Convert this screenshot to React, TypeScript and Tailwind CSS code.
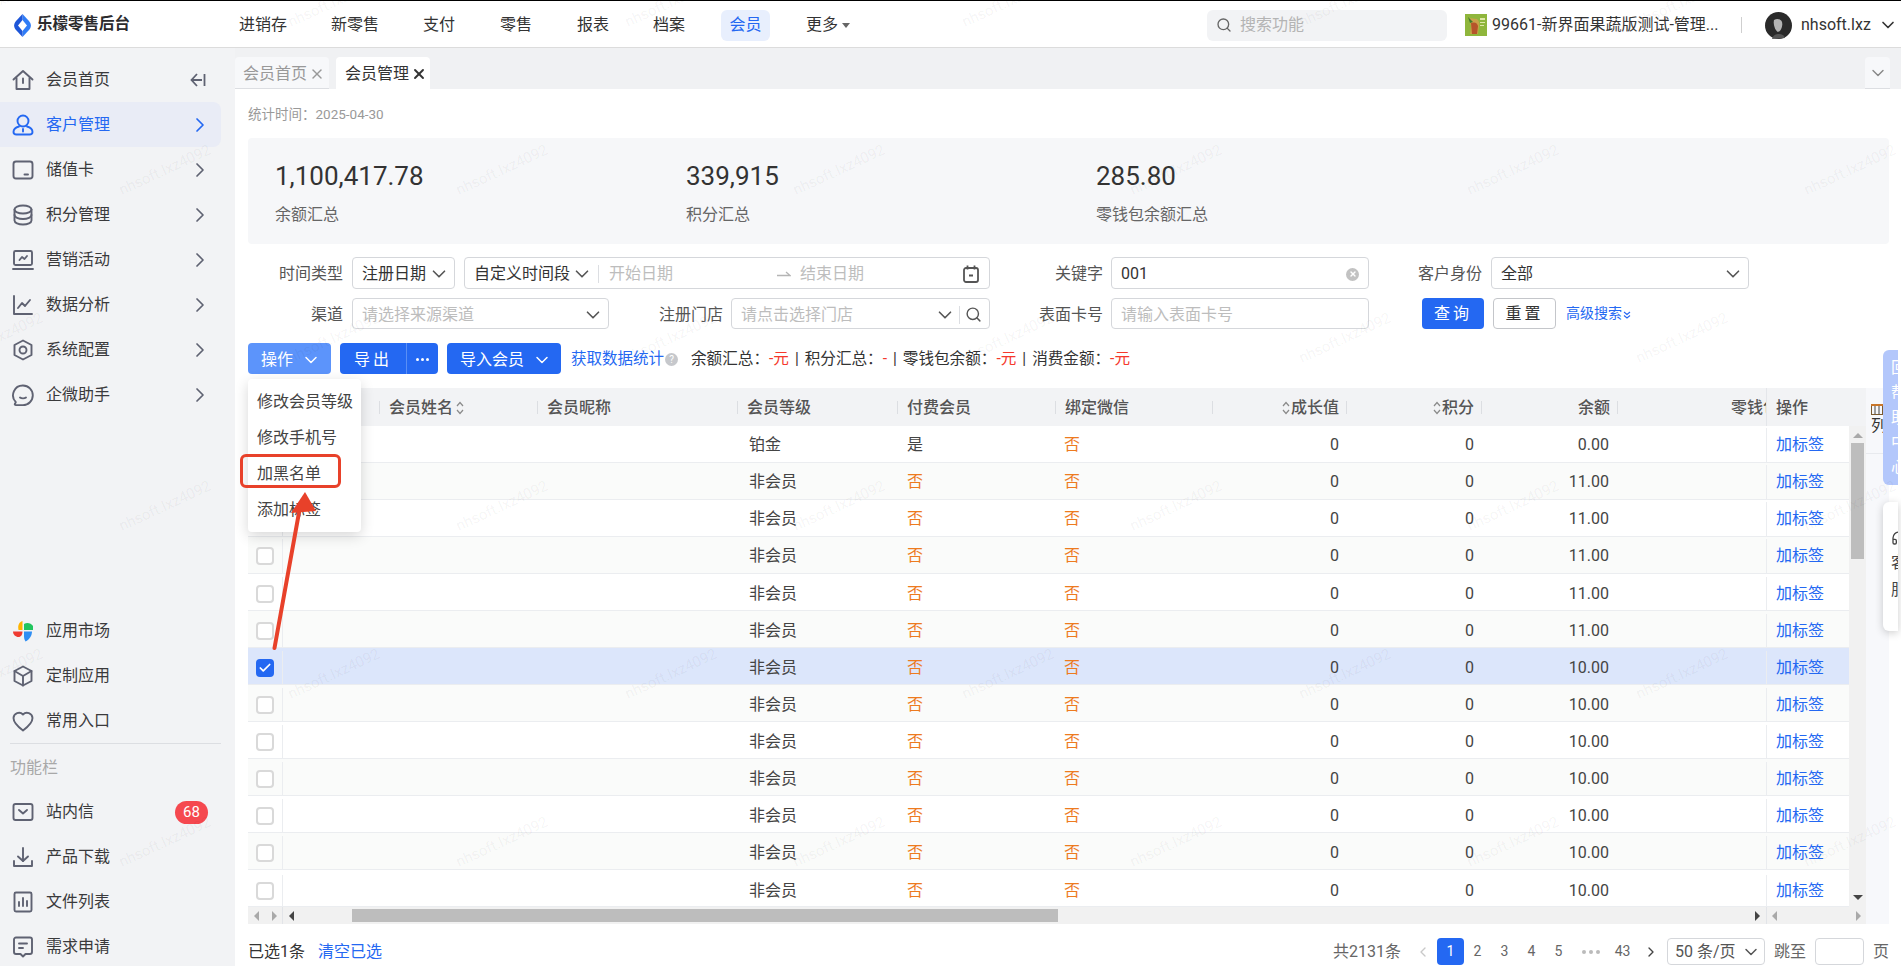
import { ChevronDown, ChevronRight, ChevronLeft, Search, X, Headphones, Check } from "lucide-react";
import type { ReactNode } from "react";

const font = "font-['Roboto','Noto_Sans_CJK_SC',sans-serif]";

function Ico({ children, className = "text-[#5f6272]" }: { children: ReactNode; className?: string }) {
  return (
    <svg
      viewBox="0 0 24 24"
      fill="none"
      stroke="currentColor"
      strokeWidth="1.9"
      strokeLinecap="round"
      strokeLinejoin="round"
      className={`w-[24px] h-[24px] shrink-0 ${className}`}
    >
      {children}
    </svg>
  );
}

const icons: Record<string, ReactNode> = {
  home: <><path d="M2.5 11.5 12 3l9.500 8.500" /><path d="M5.500 10v11h13V10" /><path d="M12 10.500v4.500" /></>,
  user: <><circle cx="12" cy="8" r="5.500" /><path d="M8 13.500C4.500 14.500 2.500 17 2.500 19c0 1.500 1 2.500 3 2.500h13c2 0 3-1 3-2.500 0-2-2-4.500-5.500-5.500" /><path d="M12 16v2.500" /></>,
  card: <><rect x="2.500" y="3.500" width="19" height="17" rx="2.500" /><path d="M13.500 16.500h3.500" /></>,
  coins: <><ellipse cx="12" cy="6.500" rx="8.500" ry="4" /><path d="M3.500 6.500v11c0 2.200 3.800 4 8.500 4s8.500-1.800 8.500-4v-11" /><path d="M3.500 12c0 2.200 3.800 4 8.500 4s8.500-1.800 8.500-4" /></>,
  screen: <><rect x="3" y="3" width="18" height="14" rx="1.500" /><path d="m8.500 12 2.500-3 2.500 2 2.500-3" /><path d="M2 21h20" /></>,
  chart: <><path d="M3 3v18h18" /><path d="m7 15 4-5 3 3 5-6" /></>,
  gear: <><path d="M12 2.500 20.500 7v10L12 21.500 3.500 17V7z" /><circle cx="12" cy="12" r="3.500" /></>,
  chat: <><path d="M12 2.500a9.800 9.800 0 0 1 0 19.600H5c-1 0-1.500-.5-1-1.300l.8-1.700A9.800 9.800 0 0 1 12 2.500z" /><path d="M9 14.500c1.500 1.200 4.500 1.200 6 0" /></>,
  box: <><path d="M12 2.500 20.500 7v10L12 21.500 3.500 17V7z" /><path d="M3.500 7 12 12l8.500-5M12 12v9.500" /></>,
  heart: <path d="M12 21.500C6 17 2.500 13.500 2.500 9A5.500 5.500 0 0 1 12 5.500 5.500 5.500 0 0 1 21.500 9c0 4.500-3.500 8-9.500 12.500z" />,
  mail: <><rect x="2.500" y="4" width="19" height="16" rx="2" /><path d="m8 10 4 3.500 4-3.500" /></>,
  download: <><path d="M12 3v13" /><path d="m7 11.500 5 4.500 5-4.500" /><path d="M3 16v5h18v-5" /></>,
  file: <><rect x="3.500" y="2.500" width="17" height="19" rx="1.500" /><path d="M8 16v-4M12 16V8M16 16v-5" /></>,
  note: <><path d="M3 4.500a2 2 0 0 1 2-2h14a2 2 0 0 1 2 2V17a2 2 0 0 1-2 2h-4.500L12 21.500 9.500 19H5a2 2 0 0 1-2-2z" /><path d="M8 8.500h8M8 13h4" /></>,
};

function AppMarket() {
  return (
    <svg viewBox="0 0 24 24" className="w-[24px] h-[24px] shrink-0">
      <path d="M11.500 2C8 3 6.500 6.500 7.500 11h4z" fill="#ffb400" />
      <path d="M13 5c3-2 7-1 9 2v4h-9z" fill="#22c55e" />
      <path d="M13 12.500h8c0 4-2.500 8-6.500 10-1.500-2-1.500-5-1.500-6z" fill="#2f8ef4" />
      <path d="M11.500 12.500H2c0 3 2.500 5.500 5.500 5.500 2.500 0 4-2.500 4-5.500z" fill="#ef3b32" />
    </svg>
  );
}

function NavItem({ icon, label, badge }: { icon: ReactNode; label: string; badge?: string }) {
  return (
    <div className="flex items-center h-[45px] shrink-0 w-[221px] pl-[11px] pt-[1px] text-[#3a3a3c]">
      {icon}
      <span className="ml-[11px] text-[16px]">{label}</span>
      {badge && (
        <span className="ml-auto mr-[13px] h-[23px] w-[33px] rounded-full bg-[#f5484f] text-white text-[15px] flex items-center justify-center">
          {badge}
        </span>
      )}
    </div>
  );
}

function MenuRow({ ic, label, active }: { ic: string; label: string; active?: boolean }) {
  return (
    <div className={`flex items-center h-[45px] shrink-0 w-[221px] pl-[11px] pt-[1px] rounded-r-lg ${active ? "bg-[#e9ecf6] text-[#2468f2]" : "text-[#3a3a3c]"}`}>
      <Ico className={active ? "text-[#2468f2]" : "text-[#5f6272]"}>{icons[ic]}</Ico>
      <span className="ml-[11px] text-[16px]">{label}</span>
      <ChevronRight className={`ml-auto mr-[9px] w-[24px] h-[24px] ${active ? "text-[#2468f2]" : "text-[#5f6272]"}`} strokeWidth={1.7} />
    </div>
  );
}

function Sidebar() {
  return (
    <aside className="w-[235px] shrink-0 bg-[#f2f3f5] pt-[9px] overflow-hidden flex flex-col">
      <div className="flex items-center h-[45px] shrink-0 w-[221px] pl-[11px] pt-[1px] text-[#3a3a3c]">
        <Ico>{icons.home}</Ico>
        <span className="ml-[11px] text-[16px]">会员首页</span>
        <svg viewBox="0 0 16 14" fill="none" stroke="#5f6272" strokeWidth="1.800" className="ml-auto mr-[15px] w-[16px] h-[14px]">
          <path d="M7 1 1.500 7 7 13M1.500 7H12M14.500 1v12" />
        </svg>
      </div>
      <MenuRow ic="user" label="客户管理" active />
      <MenuRow ic="card" label="储值卡" />
      <MenuRow ic="coins" label="积分管理" />
      <MenuRow ic="screen" label="营销活动" />
      <MenuRow ic="chart" label="数据分析" />
      <MenuRow ic="gear" label="系统配置" />
      <MenuRow ic="chat" label="企微助手" />
      <div className="mt-[191px]" />
      <NavItem icon={<AppMarket />} label="应用市场" />
      <NavItem icon={<Ico>{icons.box}</Ico>} label="定制应用" />
      <NavItem icon={<Ico>{icons.heart}</Ico>} label="常用入口" />
      <div className="ml-[10px] w-[211px] h-px bg-[#dcdee2] shrink-0" />
      <div className="h-[45px] shrink-0 pl-[10px] pt-[3px] flex items-center text-[16px] text-[#a8a8a8]">功能栏</div>
      <NavItem icon={<Ico>{icons.mail}</Ico>} label="站内信" badge="68" />
      <NavItem icon={<Ico>{icons.download}</Ico>} label="产品下载" />
      <NavItem icon={<Ico>{icons.file}</Ico>} label="文件列表" />
      <NavItem icon={<Ico>{icons.note}</Ico>} label="需求申请" />
    </aside>
  );
}

function Header() {
  const items = [
    ["进销存", "w-[92px]"],
    ["新零售", "w-[92px]"],
    ["支付", "w-[77px]"],
    ["零售", "w-[77px]"],
    ["报表", "w-[76px]"],
    ["档案", "w-[68px]"],
  ];
  return (
    <header className="h-[48px] shrink-0 border-t border-black border-b border-b-[#dcdcdc] bg-white flex items-center pt-[2px]">
      <svg viewBox="0 0 17 23" className="ml-[14px] w-[17px] h-[23px]">
        <path d="M8.500 0 15 7c2.500 3 2.500 6 0 9l-6.500 7z" fill="#2f7cf6" />
        <path d="M8.500 0 2 7c-2.500 3-2.500 6 0 9l6.500 7z" fill="#1e56d8" />
        <path d="M8.500 6 13 11.500 8.500 17 4 11.500z" fill="#fff" />
      </svg>
      <span className="ml-[6px] w-[202px] text-[15.500px] font-bold text-[#2b2b2d]">乐檬零售后台</span>
      {items.map(([t, w]) => (
        <span key={t} className={`${w} text-[16px] text-[#333]`}>{t}</span>
      ))}
      <span className="w-[49px] h-[31px] rounded-md bg-[#e8effd] text-[#2468f2] text-[16px] flex items-center justify-center">会员</span>
      <span className="ml-[36px] text-[16px] text-[#333]">更多</span>
      <span className="ml-[4px] w-0 h-0 border-x-[4px] border-x-transparent border-t-[5px] border-t-[#666]" />
      <div className="ml-[357px] w-[240px] h-[31px] rounded-md bg-[#f2f3f5] flex items-center pl-[9px] text-[#b4b4b4] text-[16px]">
        <Search className="w-[16px] h-[16px] text-[#666]" strokeWidth={2} />
        <span className="ml-[8px]">搜索功能</span>
      </div>
      <svg viewBox="0 0 22 22" className="ml-[18px] w-[22px] h-[22px] shrink-0">
        <rect width="22" height="22" fill="#8fb63c" />
        <path d="M4 4c2 3 1 6 2 8l-1 8h8l1-8c1-3 0-5-2-7z" fill="#c9a24a" />
        <path d="M6 9c3-1 6-1 7 3l-1 8H7z" fill="#b5552b" />
        <path d="M15 4h5v2h-5zM15 8h5v1h-5zM15 11h4v1h-4z" fill="#dfe8a8" />
        <path d="M3 3 8 8 5 9z" fill="#3f7a2c" />
      </svg>
      <span className="ml-[5px] w-[226px] text-[16px] text-[#333] whitespace-nowrap">99661-新界面果蔬版测试-管理...</span>
      <span className="ml-[23px] w-px h-[16px] bg-[#cfcfcf]" />
      <svg viewBox="0 0 27 27" className="ml-[23px] w-[27px] h-[27px] shrink-0">
        <circle cx="13.500" cy="13.500" r="13.500" fill="#2a2a2a" />
        <path d="M9 8c3-2 7-1 8 2 1 4-1 9-4 10-3-1-5-8-4-12z" fill="#b4b4b4" />
        <path d="M7 27c1-4 4-5 7-5s5 1 6 4z" fill="#555" />
      </svg>
      <span className="ml-[9px] text-[16px] text-[#333]">nhsoft.lxz</span>
      <ChevronDown className="ml-[7px] w-[20px] h-[20px] text-[#333]" strokeWidth={2} />
    </header>
  );
}

function Tabs() {
  return (
    <div className="h-[41px] shrink-0 bg-[#f0f1f3] flex items-end">
      <div className="w-[94px] h-[32px] pt-[2px] bg-[#f7f8fa] rounded-t border-b border-[#dcdee2] flex items-center pl-[8px] text-[16px] text-[#999]">
        会员首页<X className="ml-[2px] w-[16px] h-[16px] text-[#999]" strokeWidth={2.200} />
      </div>
      <div className="ml-[7px] w-[94px] h-[32px] pt-[2px] bg-white rounded-t flex items-center pl-[9px] text-[16px] text-[#333]">
        会员管理<X className="ml-[2px] w-[16px] h-[16px] text-[#333]" strokeWidth={2.800} />
      </div>
      <div className="ml-auto mr-[11px] w-[25px] h-[32px] bg-[#f7f8fa] rounded-t border-b border-[#dcdee2] flex items-center justify-center">
        <ChevronDown className="w-[20px] h-[20px] text-[#888]" strokeWidth={1.7} />
      </div>
    </div>
  );
}

function Stat({ value, label, className }: { value: string; label: string; className: string }) {
  return (
    <div className={className}>
      <div className="h-[36px] leading-[36px] text-[26px] text-[#333]">{value}</div>
      <div className="mt-[9px] h-[24px] leading-[24px] text-[16px] text-[#666]">{label}</div>
    </div>
  );
}

function Label({ text, className }: { text: string; className: string }) {
  return <span className={`${className} shrink-0 pt-[2px] text-right text-[16px] text-[#555]`}>{text}</span>;
}

function Select({ text, placeholder, className }: { text?: string; placeholder?: string; className: string }) {
  return (
    <div className={`${className} shrink-0 h-full border border-[#d5d7db] rounded flex items-center pl-[9px] pr-[4px] pt-[2px] text-[16px]`}>
      <span className={text ? "text-[#333]" : "text-[#bdbdbd]"}>{text ?? placeholder}</span>
      <ChevronDown className="ml-auto w-[22px] h-[22px] text-[#555]" strokeWidth={1.8} />
    </div>
  );
}

function Filters() {
  return (
    <div className="mt-[13px]">
      <div className="flex items-center h-[32px]">
        <Label text="时间类型" className="w-[104px] pr-[9px]" />
        <Select text="注册日期" className="w-[103px]" />
        <div className="ml-[9px] w-[526px] h-full shrink-0 border border-[#d5d7db] rounded flex items-center pl-[9px] pt-[2px] text-[16px]">
          <span className="text-[#333]">自定义时间段</span>
          <ChevronDown className="ml-[1px] w-[22px] h-[22px] text-[#555]" strokeWidth={1.8} />
          <span className="ml-[5px] w-px h-[18px] bg-[#dcdee2]" />
          <span className="ml-[10px] text-[#bdbdbd]">开始日期</span>
          <svg viewBox="0 0 14 6" fill="none" stroke="#b5b5b5" strokeWidth="1.300" className="ml-[104px] w-[14px] h-[6px]">
            <path d="M0 4.500h13L9 1" />
          </svg>
          <span className="ml-[9px] text-[#bdbdbd]">结束日期</span>
          <svg viewBox="0 0 16 18" fill="none" stroke="#555" strokeWidth="1.800" className="ml-auto mr-[10px] w-[16px] h-[18px]">
            <rect x="1" y="3" width="14" height="14" rx="2" />
            <path d="M4.500 0.500v4M11.500 0.500v4M6 10.500h4" />
          </svg>
        </div>
        <Label text="关键字" className="w-[121px] pr-[8px]" />
        <div className="w-[258px] h-full shrink-0 border border-[#d5d7db] rounded flex items-center pl-[9px] pr-[9px] pt-[2px] text-[16px] text-[#333]">
          001
          <span className="ml-auto w-[13px] h-[13px] rounded-full bg-[#c2c2c2] flex items-center justify-center">
            <X className="w-[8px] h-[8px] text-white" strokeWidth={4} />
          </span>
        </div>
        <Label text="客户身份" className="w-[122px] pr-[9px]" />
        <Select text="全部" className="w-[258px]" />
      </div>
      <div className="mt-[9px] flex items-center h-[31px]">
        <Label text="渠道" className="w-[104px] pr-[9px]" />
        <Select placeholder="请选择来源渠道" className="w-[257px]" />
        <Label text="注册门店" className="w-[122px] pr-[8px]" />
        <div className="w-[259px] h-full shrink-0 border border-[#d5d7db] rounded flex items-center pl-[9px] pt-[2px] text-[16px]">
          <span className="text-[#bdbdbd]">请点击选择门店</span>
          <ChevronDown className="ml-auto w-[22px] h-[22px] text-[#555]" strokeWidth={1.8} />
          <span className="ml-[3px] w-px h-[18px] bg-[#dcdee2]" />
          <Search className="ml-[5px] mr-[7px] w-[17px] h-[17px] text-[#555]" strokeWidth={2} />
        </div>
        <Label text="表面卡号" className="w-[121px] pr-[8px]" />
        <div className="w-[258px] h-full shrink-0 border border-[#d5d7db] rounded flex items-center pl-[9px] pt-[2px] text-[16px] text-[#bdbdbd]">请输入表面卡号</div>
        <button className="ml-[53px] w-[62px] h-full shrink-0 rounded bg-[#2468f2] text-white text-[16px] tracking-[3px]">查询</button>
        <button className="ml-[9px] w-[63px] h-full shrink-0 rounded border border-[#c4c6ca] bg-white text-[#333] text-[16px] tracking-[3px]">重置</button>
        <span className="ml-[10px] text-[14px] text-[#2468f2] whitespace-nowrap">高级搜索</span>
        <svg viewBox="0 0 8 8" fill="none" stroke="#2468f2" strokeWidth="1.100" className="ml-[1px] mt-[2px] w-[8px] h-[8px]">
          <path d="m1 1 3 2.500L7 1M1 4.500 4 7l3-2.500" />
        </svg>
      </div>
    </div>
  );
}

function Red({ children }: { children: ReactNode }) {
  return <span className="text-[#f5382c]">{children}</span>;
}

function Sep() {
  return <span className="mx-[6px]">|</span>;
}

function Actions() {
  return (
    <div className="mt-[14px] h-[31px] flex items-center text-[16px]">
      <div className="relative h-full">
        <button className="w-[83px] h-full pt-[2px] rounded bg-[#5c94fb] text-white flex items-center pl-[13px]">
          操作<ChevronDown className="ml-[8px] w-[20px] h-[20px]" strokeWidth={1.8} />
        </button>
        <div className="absolute z-30 left-0 top-[36px] w-[113px] h-[153px] bg-white rounded shadow-[0_4px_14px_rgba(0,0,0,0.16)] pt-[5px] pl-[9px] text-[#444] text-[16px]">
          {["修改会员等级", "修改手机号", "加黑名单", "添加标签"].map(t => (
            <div key={t} className="h-[36px] leading-[36px] whitespace-nowrap">{t}</div>
          ))}
        </div>
      </div>
      <div className="ml-[9px] w-[98px] h-full pt-[2px] rounded bg-[#2468f2] text-white flex items-center relative">
        <span className="w-[66px] text-center tracking-[3px]">导出</span>
        <span className="absolute left-[66px] top-0 w-px h-full bg-[#5a8ff5]" />
        <span className="flex-1 flex justify-center gap-[2px]">
          <i className="w-[3px] h-[3px] rounded-full bg-white" />
          <i className="w-[3px] h-[3px] rounded-full bg-white" />
          <i className="w-[3px] h-[3px] rounded-full bg-white" />
        </span>
      </div>
      <button className="ml-[9px] w-[114px] h-full pt-[2px] rounded bg-[#2468f2] text-white flex items-center pl-[13px]">
        导入会员<ChevronDown className="ml-[8px] w-[20px] h-[20px]" strokeWidth={1.8} />
      </button>
      <span className="ml-[10px] pt-[2px] text-[#2468f2] text-[15.500px] whitespace-nowrap">获取数据统计</span>
      <span className="ml-[1px] mt-[1px] w-[13px] h-[13px] shrink-0 rounded-full bg-[#c6c8cc] text-white text-[10px] flex items-center justify-center">?</span>
      <span className="ml-[13px] pt-[2px] text-[#333] text-[15.600px] whitespace-nowrap">
        余额汇总：<Red>-元</Red><Sep />积分汇总：<Red>-</Red><Sep />零钱包余额：<Red>-元</Red><Sep />消费金额：<Red>-元</Red>
      </span>
    </div>
  );
}

function SortIcon() {
  return (
    <svg viewBox="0 0 8 14" fill="none" stroke="#8a8a8a" strokeWidth="1.200" className="w-[8px] h-[14px] shrink-0">
      <path d="m1 5 3-3.500L7 5M1 9l3 3.500L7 9" />
    </svg>
  );
}

const grid = "grid grid-cols-[35px_96px_158px_200px_160px_158px_157px_134px_135px_136px_149px_83px]";

function HeadCell({ label, right, sort }: { label?: string; right?: boolean; sort?: boolean }) {
  return (
    <div className="flex items-center overflow-hidden whitespace-nowrap">
      <span className="w-px h-[13px] bg-[#dcdee2] shrink-0" />
      {right ? (
        <span className="ml-auto mr-[7px] flex items-center gap-[1px] pt-[2px]">{sort && <SortIcon />}{label}</span>
      ) : (
        <span className="ml-[9px] flex items-center gap-[3px] pt-[2px]">{label}{sort && <SortIcon />}</span>
      )}
    </div>
  );
}

function Checkbox({ checked }: { checked?: boolean }) {
  return checked ? (
    <span className="w-[18px] h-[18px] rounded-sm bg-[#2468f2] flex items-center justify-center">
      <Check className="w-[14px] h-[14px] text-white" strokeWidth={3} />
    </span>
  ) : (
    <span className="w-[18px] h-[18px] rounded-sm border-2 border-[#d9d9d9] bg-white" />
  );
}

function Row({ idx }: { idx: number }) {
  const selected = idx === 6;
  const bg = selected ? "bg-[#dce6fb]" : idx % 2 === 1 ? "bg-[#fafbfa]" : "bg-white";
  const level = idx === 0 ? "铂金" : "非会员";
  const paid = idx === 0 ? "是" : "否";
  const balance = idx === 0 ? "0.00" : idx < 6 ? "11.00" : "10.00";
  // row text sits a little lower further down the table in the reference
  const nudge = idx < 4 ? "pt-[2px]" : idx < 12 ? "pt-[3px]" : "pt-[5px]";
  return (
    <div className={`${grid} h-[37px] box-border border-b border-[#ebedf0] text-[16px] text-[#444] ${bg} ${nudge}`}>
      <div className="border-r border-[#ebedf0] flex items-center justify-center"><Checkbox checked={selected} /></div>
      <div />
      <div />
      <div />
      <div className="pl-[12px] flex items-center">{level}</div>
      <div className={`pl-[10px] flex items-center ${idx === 0 ? "text-[#444]" : "text-[#ed7b1f]"}`}>{paid}</div>
      <div className="pl-[9px] flex items-center text-[#ed7b1f]">否</div>
      <div className="pr-[7px] flex items-center justify-end">0</div>
      <div className="pr-[7px] flex items-center justify-end">0</div>
      <div className="pr-[8px] flex items-center justify-end">{balance}</div>
      <div />
      <div className="border-l border-[#ebedf0] pl-[9px] flex items-center text-[#2468f2]">加标签</div>
    </div>
  );
}

function Tri({ dir, dark }: { dir: "l" | "r" | "u" | "d"; dark?: boolean }) {
  const c = dark ? "#444" : "#a9a9a9";
  if (dir === "l") return <span className="block shrink-0 w-0 h-0 border-y-[5px] border-y-transparent border-r-[5px]" style={{ borderRightColor: c }} />;
  if (dir === "r") return <span className="block shrink-0 w-0 h-0 border-y-[5px] border-y-transparent border-l-[5px]" style={{ borderLeftColor: c }} />;
  if (dir === "u") return <span className="block shrink-0 w-0 h-0 border-x-[5px] border-x-transparent border-b-[5px]" style={{ borderBottomColor: c }} />;
  return <span className="block shrink-0 w-0 h-0 border-x-[5px] border-x-transparent border-t-[5px]" style={{ borderTopColor: c }} />;
}

function Table() {
  return (
    <div className="mt-[14px] flex">
      <div className="w-[1618px] shrink-0">
        <div className="h-[38px] bg-[#f2f3f5] text-[16px] font-medium text-[#555] w-[1618px] grid grid-cols-[35px_96px_158px_200px_160px_158px_157px_134px_135px_136px_149px_100px]">
          <div />
          <div />
          <HeadCell label="会员姓名" sort />
          <HeadCell label="会员昵称" />
          <HeadCell label="会员等级" />
          <HeadCell label="付费会员" />
          <HeadCell label="绑定微信" />
          <HeadCell label="成长值" right sort />
          <HeadCell label="积分" right sort />
          <HeadCell label="余额" right />
          <div className="flex items-center overflow-hidden whitespace-nowrap">
            <span className="w-px h-[13px] bg-[#dcdee2] shrink-0" />
            <span className="ml-[113px] pt-[2px]">零钱包余额</span>
          </div>
          <div className="border-l border-[#e4e6ea] pl-[9px] pt-[2px] flex items-center">操作</div>
        </div>
        <div className="flex h-[481px]">
          <div className="w-[1601px] shrink-0">
            {Array.from({ length: 13 }, (_, i) => <Row key={i} idx={i} />)}
          </div>
          <div className="w-[17px] bg-[#f1f1f1] flex flex-col items-center">
            <div className="mt-[7px]"><Tri dir="u" /></div>
            <div className="mt-[5px] w-[13px] h-[116px] bg-[#bdbdbd]" />
            <div className="mt-auto mb-[7px]"><Tri dir="d" dark /></div>
          </div>
        </div>
        <div className="h-[17px] bg-[#f1f1f1] flex items-center">
          <div className="w-[35px] shrink-0 h-full border-r border-[#e2e4e8] flex items-center justify-center gap-[13px]"><Tri dir="l" /><Tri dir="r" /></div>
          <div className="w-[1483px] shrink-0 h-full flex items-center pl-[6px] pr-[6px]">
            <Tri dir="l" dark />
            <div className="ml-[58px] w-[706px] h-[13px] bg-[#bdbdbd]" />
            <div className="ml-auto"><Tri dir="r" dark /></div>
          </div>
          <div className="flex-1 h-full border-l border-[#e2e4e8] flex items-center justify-between pl-[5px] pr-[5px]"><Tri dir="l" /><Tri dir="r" /></div>
        </div>
      </div>
      <div className="w-[23px] shrink-0 bg-[#f7f8fb]">
        <div className="h-[66px] border-b border-[#e8eaee] pl-[5px] pt-[16px] text-[16px] text-[#333]">
          <svg viewBox="0 0 12 11" className="w-[12px] h-[11px]" fill="none">
            <rect x="0.500" y="0.500" width="11" height="10" stroke="#7a5a30" />
            <path d="M0 1h12" stroke="#c9762a" strokeWidth="2" />
            <path d="M4 2v8M8 2v8" stroke="#444" />
          </svg>
          <div className="leading-[22px]">列</div>
        </div>
      </div>
    </div>
  );
}

function PageNum({ n, active }: { n: string; active?: boolean }) {
  return (
    <span className={`w-[27px] h-[27px] shrink-0 rounded flex items-center justify-center text-[14px] ${active ? "bg-[#2468f2] text-white" : "text-[#666]"}`}>{n}</span>
  );
}

function Footer() {
  return (
    <div className="mt-[14px] h-[27px] flex items-center text-[16px] whitespace-nowrap">
      <span className="text-[#333] shrink-0">已选1条</span>
      <span className="ml-[13px] text-[#2468f2] shrink-0">清空已选</span>
      <span className="ml-[951px] text-[#666] shrink-0">共2131条</span>
      <ChevronLeft className="ml-[14px] w-[16px] h-[16px] shrink-0 text-[#c9c9c9]" strokeWidth={2} />
      <span className="ml-[6px] shrink-0"><PageNum n="1" active /></span>
      <PageNum n="2" />
      <PageNum n="3" />
      <PageNum n="4" />
      <PageNum n="5" />
      <span className="ml-[8px] w-[22px] shrink-0 flex justify-center gap-[3px]">
        <i className="w-[4px] h-[4px] rounded-full bg-[#bbb]" />
        <i className="w-[4px] h-[4px] rounded-full bg-[#bbb]" />
        <i className="w-[4px] h-[4px] rounded-full bg-[#bbb]" />
      </span>
      <span className="ml-[7px] shrink-0"><PageNum n="43" /></span>
      <ChevronRight className="ml-[7px] w-[16px] h-[16px] shrink-0 text-[#444]" strokeWidth={2} />
      <div className="ml-[8px] w-[98px] h-full shrink-0 border border-[#d5d7db] rounded flex items-center pl-[7px] pr-[3px] text-[#555]">
        50 条/页<ChevronDown className="ml-auto w-[20px] h-[20px] text-[#555]" strokeWidth={1.8} />
      </div>
      <span className="ml-[9px] text-[#666] shrink-0">跳至</span>
      <span className="ml-[9px] w-[49px] h-full shrink-0 border border-[#d5d7db] rounded" />
      <span className="ml-[9px] text-[#666] shrink-0">页</span>
    </div>
  );
}

function Watermarks() {
  const marks: { x: number; y: number }[] = [];
  for (let r = -1; r <= 5; r++) {
    for (let c = -1; c <= 6; c++) {
      marks.push({ x: 165 + c * 337 + (r % 2 !== 0 ? 168.5 : 0), y: 170 + r * 168 });
    }
  }
  return (
    <div className="absolute inset-0 overflow-hidden pointer-events-none z-40">
      {marks.map((m, i) => (
        <span
          key={i}
          className="absolute -translate-x-1/2 -translate-y-1/2 -rotate-[25deg] text-[15px] text-black/5 whitespace-nowrap"
          style={{ left: m.x, top: m.y }}
        >
          nhsoft.lxz4092
        </span>
      ))}
    </div>
  );
}

function Annotation() {
  return (
    <>
      <div className="absolute z-50 left-[240px] top-[454px] w-[101px] h-[34px] border-[3px] border-[#e8412a] rounded-md" />
      <svg viewBox="0 0 60 170" className="absolute z-50 left-[265px] top-[485px] w-[60px] h-[170px]">
        <path d="M9.500 163 35 22" stroke="#e8412a" strokeWidth="4" strokeLinecap="round" fill="none" />
        <path d="M40 7 26 28 51 26z" fill="#e8412a" />
      </svg>
    </>
  );
}

function SideWidgets() {
  return (
    <>
      <div className="absolute z-30 right-[3px] top-[350px] w-[15px] h-[135px] rounded-l-md bg-[#b3c7fb] overflow-hidden pl-[8px] pt-[5px] text-[16px] leading-[25px] text-white">
        {["回", "帮", "助", "中", "心"].map(c => <div key={c} className="w-[16px]">{c}</div>)}
      </div>
      <div className="absolute z-30 right-[3px] top-[502px] w-[15px] h-[129px] rounded-l-md bg-white shadow-[0_2px_8px_rgba(0,0,0,0.2)] overflow-hidden pl-[8px] pt-[28px] text-[16px] leading-[27px] text-[#444]">
        <Headphones className="w-[16px] h-[16px] shrink-0" strokeWidth={2} />
        <div className="w-[16px] mt-[3px]">客</div>
        <div className="w-[16px]">服</div>
      </div>
    </>
  );
}

export default function App() {
  return (
    <div className={`relative w-[1901px] h-[966px] overflow-hidden bg-white flex flex-col ${font}`}>
      <Header />
      <div className="flex flex-1 min-h-0">
        <Sidebar />
        <main className="w-[1666px] flex flex-col min-h-0">
          <Tabs />
          <div className="flex-1 pl-[13px] pr-[12px]">
            <div className="pt-[15px] h-[35px] text-[13.500px] leading-[20px] text-[#999]">统计时间：2025-04-30</div>
            <div className="mt-[14px] h-[106px] rounded bg-[#f6f7f9] pt-[20px] pl-[27px] flex">
              <Stat value="1,100,417.78" label="余额汇总" className="w-[411px]" />
              <Stat value="339,915" label="积分汇总" className="w-[410px]" />
              <Stat value="285.80" label="零钱包余额汇总" className="w-[200px]" />
            </div>
            <Filters />
            <Actions />
            <Table />
            <Footer />
          </div>
        </main>
      </div>
      <SideWidgets />
      <Annotation />
      <Watermarks />
    </div>
  );
}
